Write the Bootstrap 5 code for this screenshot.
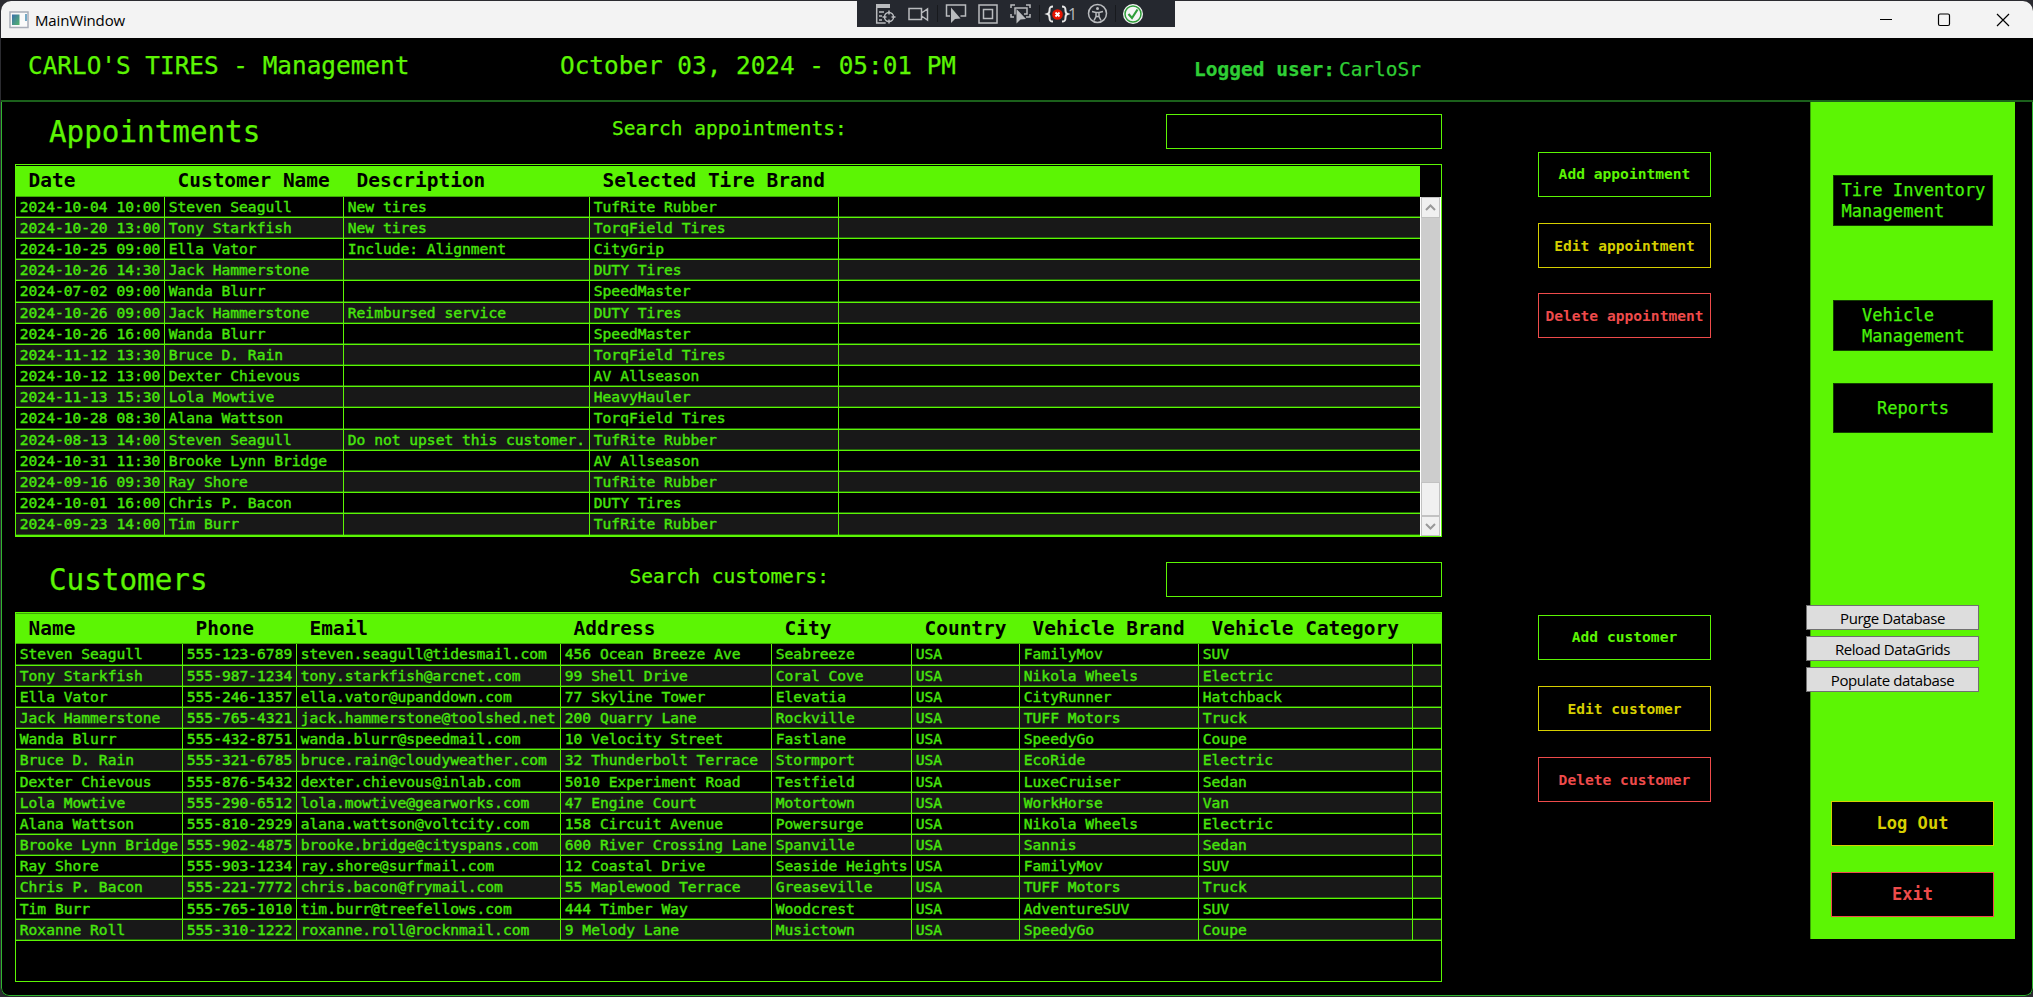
<!DOCTYPE html>
<html lang="en">
<head>
<meta charset="utf-8">
<title>MainWindow</title>
<link href="https://cdn.jsdelivr.net/npm/bootstrap@5.3.0/dist/css/bootstrap.min.css" rel="stylesheet">
<style>
:root{--lime:#5cf504;--term:#47e60c}
html,body{height:100%}
body{background:#2b2b30;overflow:hidden;font-family:"DejaVu Sans Mono",monospace;line-height:1;color:var(--lime)}
.app-window{width:2033px;height:997px;padding:1px 0 0 1px}
.frame{height:995px;background:#000;border-radius:10px 10px 8px 8px;overflow:hidden}
.titlebar{height:37px;background:#f3f3f3;color:#000;font:15px "Open Sans",sans-serif}
.titlebar .app-name{letter-spacing:-.15px;margin-left:5px}
.vs-tools{top:0;left:857px;width:318px;height:27px}
.app-head{height:64px;border-bottom:2px solid #1b601b;display:grid;grid-template-columns:532px 634px auto 1fr;padding-left:27px;white-space:nowrap}
.t25,.t20,.t30{-webkit-text-stroke:.25px}
.t25{font-size:24.36px;line-height:28px;padding-top:14px}
.t20{font-size:19.5px;line-height:24px}
.t30{font-size:29.25px;line-height:36px}
.user-line{color:#2fce35;padding-top:20px}
.workspace{height:894px;border:1px solid #2fb52f;border-top:0;display:grid;grid-template-columns:1440px 269px 99px 205px 1fr;border-radius:0 0 8px 8px}
.panel-left{padding-left:13px}
.section-head{display:grid;grid-template-columns:561px 590px 276px;white-space:nowrap}
.search{height:35px;border:1px solid var(--lime);background:#000;border-radius:0;width:276px;padding:0}
.datagrid{width:1427px;border:1px solid var(--lime);font-size:14.6px}
.g-head{display:grid;background:var(--lime);color:#000;font-weight:700;font-size:19.47px;border-bottom:1px solid #3fa606;white-space:pre}
.g-head>div{padding:3px 0 0 12.5px;line-height:24px}
.g-row{display:grid;height:21.2px;border-bottom:1px solid var(--lime);box-shadow:inset 0 -1px #24690a;color:var(--term);white-space:pre;-webkit-text-stroke:.4px}
.g-row:nth-child(even){background:#181818}
.g-row>div{border-right:1px solid var(--lime);padding-left:3.8px;line-height:20.2px}
.appts .g-head,.appts .g-row{grid-template-columns:149px 179px 246px 249px 1fr}
.appts .g-row>div:last-child,.custs .g-row>div:last-child{border-right:0}
.custs .g-head,.custs .g-row{grid-template-columns:167px 114px 264px 211px 140px 108px 179px 214px 1fr}
.scroller{width:21px;background:#cdcdcd;border:1px solid #fff;border-width:0 1px}
.scroller>div{background:#f0f0f0;border:1px solid #c2c2c2}
.act{height:45px;width:173px;border:1px solid var(--lime);border-radius:0;background:#000;color:var(--lime);font-weight:700;font-size:14.6px;padding:0;white-space:nowrap;line-height:1}
.act.warn{border-color:#d6cf00;color:#d6cf00;padding-top:1px}
.act.stop{border-color:#ee4b4b;color:#ee4b4b;padding-top:1px}
.sidebar{height:837px;background:var(--lime);border-left:1px solid #3aa005;position:relative}
.nav-btn{width:160px;height:51px;background:#000;color:#47f20a;border:1px solid #134000;border-radius:0;font-size:17.07px;line-height:20.6px;padding:0;margin-left:22px;text-align:left;-webkit-text-stroke:.25px}
.act.big{width:163px;font-size:17.04px;margin-left:20px;padding-top:0}
.dev-tools{position:absolute;left:-5px;top:503px}
.dev{width:173px;height:25px;padding:0;border:1px solid #707070;border-radius:0;background:#ddd;color:#000;font:15px/20px "Open Sans",sans-serif;letter-spacing:-.42px}
</style>
</head>
<body>
<div class="app-window position-relative">
 <div class="frame">
  <div class="titlebar d-flex align-items-center">
   <svg class="ms-2" width="21" height="18" viewBox="0 0 21 18"><rect x="1" y="1" width="18" height="15.500" fill="#fafafa" stroke="#a8adb8" stroke-width="1.500"/><defs><linearGradient id="ic" x2="1" y2="1"><stop stop-color="#3b6fae"/><stop offset="1" stop-color="#52b56b"/></linearGradient></defs><rect x="3" y="3.500" width="7.500" height="10.500" fill="url(#ic)"/><path d="M17 3v7" stroke="#4a8fb5" stroke-width="1.500"/></svg>
   <span class="app-name flex-grow-1">MainWindow</span>
   <svg width="160" height="36" viewBox="0 0 160 36" fill="none" stroke="#000" stroke-width="1.200"><path d="M7 17.500h12"/><rect x="65.500" y="12" width="11" height="11.500" rx="1.500"/><path d="M124 12l12 12M136 12l-12 12"/></svg>
  </div>
  <header class="app-head">
   <div class="t25">CARLO'S TIRES - Management</div>
   <div class="t25">October 03, 2024 - 05:01 PM</div>
   <div class="t20 user-line fw-bold">Logged user:</div>
   <div class="t20 user-line ps-1">CarloSr</div>
  </header>
  <main class="workspace">
   <section class="panel-left">
    <div class="section-head" style="height:62px">
     <div class="t30" style="padding:12px 0 0 34px">Appointments</div>
     <div class="t20" style="padding:15px 0 0 36px">Search appointments:</div>
     <div style="padding-top:12px"><input class="search d-block" aria-label="Search appointments"></div>
    </div>
    <div class="datagrid appts d-flex" style="height:373px">
     <div class="flex-grow-1">
      <div class="g-head" style="height:30.600px;margin-top:1px"><div>Date</div><div>Customer Name</div><div>Description</div><div>Selected Tire Brand</div><div></div></div>
      <div id="appts"></div>
     </div>
     <div class="scroller d-flex flex-column" style="margin-top:32px;height:339px">
      <div style="height:21px"><svg class="d-block" width="17" height="19" fill="none" stroke="#999" stroke-width="2"><path d="M4 12l4.500-4.500L13 12"/></svg></div>
      <div class="mt-auto" style="height:34px"></div>
      <div style="height:20px"><svg class="d-block" width="17" height="18" fill="none" stroke="#999" stroke-width="2"><path d="M4 7l4.500 4.500L13 7"/></svg></div>
     </div>
    </div>
    <div class="section-head" style="height:75px">
     <div class="t30" style="padding:25px 0 0 34px">Customers</div>
     <div class="t20" style="padding:28px 0 0 53.500px">Search customers:</div>
     <div style="padding-top:25px"><input class="search d-block" aria-label="Search customers"></div>
    </div>
    <div class="datagrid custs" style="height:370px">
     <div class="g-head" style="height:31.400px;border-top:1px solid #3fa606"><div>Name</div><div>Phone</div><div>Email</div><div>Address</div><div>City</div><div>Country</div><div>Vehicle Brand</div><div>Vehicle Category</div><div></div></div>
     <div id="custs"></div>
    </div>
   </section>
   <section class="d-flex flex-column align-items-end" style="padding-top:50px">
    <div class="d-flex flex-column" style="gap:26px;height:463px">
     <button class="btn act">Add appointment</button>
     <button class="btn act warn">Edit appointment</button>
     <button class="btn act stop" style="margin-top:-1px">Delete appointment</button>
    </div>
    <div class="d-flex flex-column" style="gap:26px">
     <button class="btn act">Add customer</button>
     <button class="btn act warn">Edit customer</button>
     <button class="btn act stop">Delete customer</button>
    </div>
   </section>
   <div></div>
   <aside class="sidebar d-flex flex-column" style="padding-top:73px">
    <button class="btn nav-btn" style="padding-left:7.500px">Tire Inventory<br>Management</button>
    <button class="btn nav-btn" style="margin-top:74px;padding-left:28px">Vehicle<br>Management</button>
    <button class="btn nav-btn text-center" style="margin-top:32px;height:50px">Reports</button>
    <div class="mt-auto d-flex flex-column" style="gap:26px;margin-bottom:22px">
     <button class="btn act warn big">Log Out</button>
     <button class="btn act stop big">Exit</button>
    </div>
    <div class="dev-tools d-flex flex-column" style="gap:6px">
     <button class="btn dev">Purge Database</button>
     <button class="btn dev">Reload DataGrids</button>
     <button class="btn dev">Populate database</button>
    </div>
   </aside>
  </main>
 </div>
 <div class="vs-tools position-absolute">
  <svg class="d-block" width="318" height="27" viewBox="0 0 318 27" fill="none" stroke="#b9bbbe" stroke-width="1.500">
   <rect width="318" height="27" fill="#25282f" stroke="none"/>
   <path d="M80.500 5v17M182.500 5v17M258.500 5v17" stroke="#17191d" stroke-width="1"/>
   <path d="M19 4h14v4H19z" fill="#b9bbbe" stroke="none"/><path d="M19.700 8v15h9M22 12h5M22 16h3M22 20h3"/><circle cx="32" cy="17" r="4.500"/><path d="M32 10.500v4M32 19.500v4M25.500 17h4M34.500 17h4"/>
   <rect x="52" y="8.500" width="18" height="11" stroke="none"/><path d="M52 8.500h12.500v11H52zM64.500 13l6-4v11l-6-4"/>
   <path d="M93 16h-3.500V5h19v11h-5"/><path d="M94 7.500V23l4-4 5.500-.5z" fill="#b9bbbe" stroke="none"/>
   <rect x="122" y="5" width="18" height="18"/><rect x="126.500" y="9.500" width="9" height="9"/>
   <path d="M154 8V5h4M169 5h4v3M173 14v3h-4M157 17h-3v-3M158 14.500V8h12v6h-3"/><path d="M159.500 9v14.500l4-4 5.500-.5z" fill="#b9bbbe" stroke="none"/>
   <path d="M196 6.500c-3 0-3.500 1-3.500 4 0 2-.5 3-2 3.500 1.500.5 2 1.500 2 3.500 0 3 .5 4 3.500 4M205 6.500c3 0 3.500 1 3.500 4 0 2 .5 3 2 3.500-1.500.5-2 1.500-2 3.500 0 3-.5 4-3.500 4" stroke="#e8e8e8" stroke-width="2"/><circle cx="200.500" cy="14.500" r="5.300" fill="#e51400" stroke="none"/><path d="M198.500 12.500l4 4M202.500 12.500l-4 4" stroke="#fff" stroke-width="1.800"/>
   <text x="211" y="20" fill="#b9bbbe" stroke="none" font-family="Open Sans" font-size="16">1</text>
   <circle cx="240.500" cy="13.500" r="9"/><circle cx="240.500" cy="8.500" r="1.500" fill="#b9bbbe" stroke="none"/><path d="M235 11.500l4 1h3l4-1M239 12.500v4l-2 4M242 12.500v4l2 4M239 16.500h3"/>
   <circle cx="276" cy="14" r="10" fill="#f5f5f5" stroke="none"/><circle cx="276" cy="14" r="8" stroke="#2f9e3a"/><path d="M271.500 14l3.500 4 5.500-8.500" stroke="#2f9e3a" stroke-width="2.200"/>
  </svg>
 </div>
</div>
<script src="https://cdn.jsdelivr.net/npm/bootstrap@5.3.0/dist/js/bootstrap.bundle.min.js"></script>
<script>
const appts = `2024-10-04 10:00|Steven Seagull|New tires|TufRite Rubber
2024-10-20 13:00|Tony Starkfish|New tires|TorqField Tires
2024-10-25 09:00|Ella Vator|Include: Alignment|CityGrip
2024-10-26 14:30|Jack Hammerstone||DUTY Tires
2024-07-02 09:00|Wanda Blurr||SpeedMaster
2024-10-26 09:00|Jack Hammerstone|Reimbursed service|DUTY Tires
2024-10-26 16:00|Wanda Blurr||SpeedMaster
2024-11-12 13:30|Bruce D. Rain||TorqField Tires
2024-10-12 13:00|Dexter Chievous||AV Allseason
2024-11-13 15:30|Lola Mowtive||HeavyHauler
2024-10-28 08:30|Alana Wattson||TorqField Tires
2024-08-13 14:00|Steven Seagull|Do not upset this customer.|TufRite Rubber
2024-10-31 11:30|Brooke Lynn Bridge||AV Allseason
2024-09-16 09:30|Ray Shore||TufRite Rubber
2024-10-01 16:00|Chris P. Bacon||DUTY Tires
2024-09-23 14:00|Tim Burr||TufRite Rubber`;
const custs = `Steven Seagull|555-123-6789|steven.seagull@tidesmail.com|456 Ocean Breeze Ave|Seabreeze|USA|FamilyMov|SUV
Tony Starkfish|555-987-1234|tony.starkfish@arcnet.com|99 Shell Drive|Coral Cove|USA|Nikola Wheels|Electric
Ella Vator|555-246-1357|ella.vator@upanddown.com|77 Skyline Tower|Elevatia|USA|CityRunner|Hatchback
Jack Hammerstone|555-765-4321|jack.hammerstone@toolshed.net|200 Quarry Lane|Rockville|USA|TUFF Motors|Truck
Wanda Blurr|555-432-8751|wanda.blurr@speedmail.com|10 Velocity Street|Fastlane|USA|SpeedyGo|Coupe
Bruce D. Rain|555-321-6785|bruce.rain@cloudyweather.com|32 Thunderbolt Terrace|Stormport|USA|EcoRide|Electric
Dexter Chievous|555-876-5432|dexter.chievous@inlab.com|5010 Experiment Road|Testfield|USA|LuxeCruiser|Sedan
Lola Mowtive|555-290-6512|lola.mowtive@gearworks.com|47 Engine Court|Motortown|USA|WorkHorse|Van
Alana Wattson|555-810-2929|alana.wattson@voltcity.com|158 Circuit Avenue|Powersurge|USA|Nikola Wheels|Electric
Brooke Lynn Bridge|555-902-4875|brooke.bridge@cityspans.com|600 River Crossing Lane|Spanville|USA|Sannis|Sedan
Ray Shore|555-903-1234|ray.shore@surfmail.com|12 Coastal Drive|Seaside Heights|USA|FamilyMov|SUV
Chris P. Bacon|555-221-7772|chris.bacon@frymail.com|55 Maplewood Terrace|Greaseville|USA|TUFF Motors|Truck
Tim Burr|555-765-1010|tim.burr@treefellows.com|444 Timber Way|Woodcrest|USA|AdventureSUV|SUV
Roxanne Roll|555-310-1222|roxanne.roll@rocknmail.com|9 Melody Lane|Musictown|USA|SpeedyGo|Coupe`;
const fill = (id, data) => {
  document.getElementById(id).innerHTML = data.split('\n').map(r =>
    '<div class="g-row">' + (r + '|').split('|').map(c => '<div>' + c + '</div>').join('') + '</div>').join('');
};
fill('appts', appts);
fill('custs', custs);
</script>
</body>
</html>
